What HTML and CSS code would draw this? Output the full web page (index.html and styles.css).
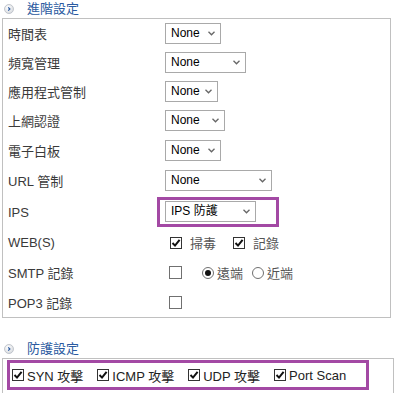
FILE: index.html
```html
<!DOCTYPE html>
<html>
<head>
<meta charset="utf-8">
<link rel="stylesheet" href="styles.css">
</head>
<body>
<div class="section-head">
  <span class="head-icon"><svg width="10" height="10" viewBox="0 0 10 10"><defs><radialGradient id="g1" cx="40%" cy="35%" r="70%"><stop offset="0" stop-color="#ffffff"/><stop offset="1" stop-color="#d6d9de"/></radialGradient></defs><circle cx="5" cy="5" r="4.5" fill="url(#g1)" stroke="#b9bdc4" stroke-width="0.8"/><path d="M4.2 3.3 L5.9 5 L4.2 6.7" fill="none" stroke="#2b5aa0" stroke-width="1.2"/></svg></span>
  <span class="head-title">進階設定</span>
</div>
<div class="panel">
  <div class="grid">
    <div class="label">時間表</div>
    <div class="value"><span class="sel w56"><span class="sel-text">None</span><svg class="chev" width="7" height="5" viewBox="0 0 7 5"><path d="M0.5 0.8 L3.5 3.8 L6.5 0.8" fill="none" stroke="#666" stroke-width="1.3"/></svg></span></div>

    <div class="label">頻寬管理</div>
    <div class="value"><span class="sel w81"><span class="sel-text">None</span><svg class="chev" width="7" height="5" viewBox="0 0 7 5"><path d="M0.5 0.8 L3.5 3.8 L6.5 0.8" fill="none" stroke="#666" stroke-width="1.3"/></svg></span></div>

    <div class="label">應用程式管制</div>
    <div class="value"><span class="sel w50"><span class="sel-text">None</span><svg class="chev" width="7" height="5" viewBox="0 0 7 5"><path d="M0.5 0.8 L3.5 3.8 L6.5 0.8" fill="none" stroke="#666" stroke-width="1.3"/></svg></span></div>

    <div class="label">上網認證</div>
    <div class="value"><span class="sel w59"><span class="sel-text">None</span><svg class="chev" width="7" height="5" viewBox="0 0 7 5"><path d="M0.5 0.8 L3.5 3.8 L6.5 0.8" fill="none" stroke="#666" stroke-width="1.3"/></svg></span></div>

    <div class="label">電子白板</div>
    <div class="value"><span class="sel w56"><span class="sel-text">None</span><svg class="chev" width="7" height="5" viewBox="0 0 7 5"><path d="M0.5 0.8 L3.5 3.8 L6.5 0.8" fill="none" stroke="#666" stroke-width="1.3"/></svg></span></div>

    <div class="label">URL 管制</div>
    <div class="value"><span class="sel w107"><span class="sel-text">None</span><svg class="chev" width="7" height="5" viewBox="0 0 7 5"><path d="M0.5 0.8 L3.5 3.8 L6.5 0.8" fill="none" stroke="#666" stroke-width="1.3"/></svg></span></div>

    <div class="label">IPS</div>
    <div class="value"><span class="highlight-sel"><span class="sel w91"><span class="sel-text">IPS 防護</span><svg class="chev" width="7" height="5" viewBox="0 0 7 5"><path d="M0.5 0.8 L3.5 3.8 L6.5 0.8" fill="none" stroke="#666" stroke-width="1.3"/></svg></span></span></div>

    <div class="label">WEB(S)</div>
    <div class="value opts">
      <span class="opt web1"><span class="cb checked"><svg width="10" height="10" viewBox="0 0 10 10"><path d="M1.5 5 L4 7.6 L8.6 1.8" fill="none" stroke="#111" stroke-width="2"/></svg></span><span class="opt-text">掃毒</span></span>
      <span class="opt web2"><span class="cb checked"><svg width="10" height="10" viewBox="0 0 10 10"><path d="M1.5 5 L4 7.6 L8.6 1.8" fill="none" stroke="#111" stroke-width="2"/></svg></span><span class="opt-text">記錄</span></span>
    </div>

    <div class="label">SMTP 記錄</div>
    <div class="value opts">
      <span class="cb empty"></span>
      <span class="opt radio1"><span class="radio on"><span class="dot"></span></span><span class="opt-text">遠端</span></span>
      <span class="opt radio2"><span class="radio"></span><span class="opt-text">近端</span></span>
    </div>

    <div class="label">POP3 記錄</div>
    <div class="value opts"><span class="cb empty"></span></div>
  </div>
</div>

<div class="section-head second">
  <span class="head-icon"><svg width="10" height="10" viewBox="0 0 10 10"><defs><radialGradient id="g2" cx="40%" cy="35%" r="70%"><stop offset="0" stop-color="#ffffff"/><stop offset="1" stop-color="#d6d9de"/></radialGradient></defs><circle cx="5" cy="5" r="4.5" fill="url(#g2)" stroke="#b9bdc4" stroke-width="0.8"/><path d="M4.2 3.3 L5.9 5 L4.2 6.7" fill="none" stroke="#2b5aa0" stroke-width="1.2"/></svg></span>
  <span class="head-title">防護設定</span>
</div>
<div class="panel panel2">
  <div class="attack-box">
    <span class="atk"><span class="cb checked"><svg width="10" height="10" viewBox="0 0 10 10"><path d="M1.5 5 L4 7.6 L8.6 1.8" fill="none" stroke="#111" stroke-width="2"/></svg></span><span class="atk-text">SYN 攻擊</span></span>
    <span class="atk"><span class="cb checked"><svg width="10" height="10" viewBox="0 0 10 10"><path d="M1.5 5 L4 7.6 L8.6 1.8" fill="none" stroke="#111" stroke-width="2"/></svg></span><span class="atk-text">ICMP 攻擊</span></span>
    <span class="atk"><span class="cb checked"><svg width="10" height="10" viewBox="0 0 10 10"><path d="M1.5 5 L4 7.6 L8.6 1.8" fill="none" stroke="#111" stroke-width="2"/></svg></span><span class="atk-text">UDP 攻擊</span></span>
    <span class="atk"><span class="cb checked"><svg width="10" height="10" viewBox="0 0 10 10"><path d="M1.5 5 L4 7.6 L8.6 1.8" fill="none" stroke="#111" stroke-width="2"/></svg></span><span class="atk-text">Port Scan</span></span>
  </div>
</div>
</body>
</html>
```
FILE: styles.css
```css
html, body {
  margin: 0;
  padding: 0;
  background: #ffffff;
}
body {
  font-family: "Liberation Sans", "Noto Sans CJK TC", sans-serif;
  font-size: 13px;
  color: #333;
  width: 397px;
  height: 393px;
  overflow: hidden;
}
.section-head {
  height: 18px;
  display: flex;
  align-items: center;
  padding-left: 4px;
}
.section-head.second {
  margin-top: 22px;
}
.head-icon {
  width: 10px;
  height: 10px;
  display: flex;
}
.head-title {
  margin-left: 13px;
  color: #2b5aa0;
  font-size: 13px;
  line-height: 18px;
}
.panel {
  margin-left: 2px;
  width: 387px;
  border: 1px solid #c0c0c0;
}
.grid {
  display: grid;
  grid-template-columns: 162px 1fr;
  grid-template-rows: 29px 29px 29px 29px 30px 31px 32px 29px 31px 29px;
}
.label {
  display: flex;
  align-items: center;
  padding-left: 5px;
  color: #3a3a3a;
}
.value {
  display: flex;
  align-items: center;
}
.sel {
  box-sizing: border-box;
  height: 21px;
  border: 1px solid #a9a9a9;
  display: flex;
  align-items: center;
  justify-content: space-between;
  padding: 0 5px 0 5px;
  color: #000;
  background: #fff;
}
.sel-text {
  font-size: 12px;
  line-height: 19px;
}
.chev {
  display: block;
  flex-shrink: 0;
}
.w50 { width: 53px; }
.w56 { width: 56px; }
.w59 { width: 60px; }
.w81 { width: 81px; }
.w91 { width: 91px; }
.w107 { width: 107px; }
.highlight-sel {
  display: flex;
  align-items: center;
  margin-left: -8px;
  border: 3px solid #a349a4;
  padding: 1px 20px 2px 5px;
}
.opts .opt {
  display: flex;
  align-items: center;
}
.opt-text {
  color: #555;
}
.cb {
  box-sizing: border-box;
  display: flex;
  align-items: center;
  justify-content: center;
  width: 12px;
  height: 12px;
  background: #fff;
}
.cb.checked {
  border: 1px solid #333;
}
.cb.empty {
  width: 13px;
  height: 13px;
  border: 1px solid #707070;
  margin-left: 4px;
}
.web1 { margin-left: 5px; }
.web1 .opt-text { margin-left: 8px; }
.web2 { margin-left: 17px; }
.web2 .opt-text { margin-left: 8px; }
.radio {
  box-sizing: border-box;
  width: 12px;
  height: 12px;
  border: 1px solid #707070;
  border-radius: 50%;
  display: flex;
  align-items: center;
  justify-content: center;
  background: #fff;
}
.radio .dot {
  width: 6px;
  height: 6px;
  border-radius: 50%;
  background: #111;
}
.radio1 { margin-left: 20px; }
.radio1 .opt-text { margin-left: 3px; }
.radio2 { margin-left: 9px; }
.radio2 .opt-text { margin-left: 3px; }
.panel2 {
  padding: 1px 0 3px 4px;
  box-sizing: border-box;
  width: 392px;
}
.attack-box {
  box-sizing: border-box;
  width: 362px;
  height: 30px;
  border: 3px solid #a349a4;
  display: flex;
  align-items: center;
  padding-left: 2px;
}
.atk {
  display: flex;
  align-items: center;
  margin-right: 14px;
}
.atk-text {
  margin-left: 3px;
  color: #222;
}
```
